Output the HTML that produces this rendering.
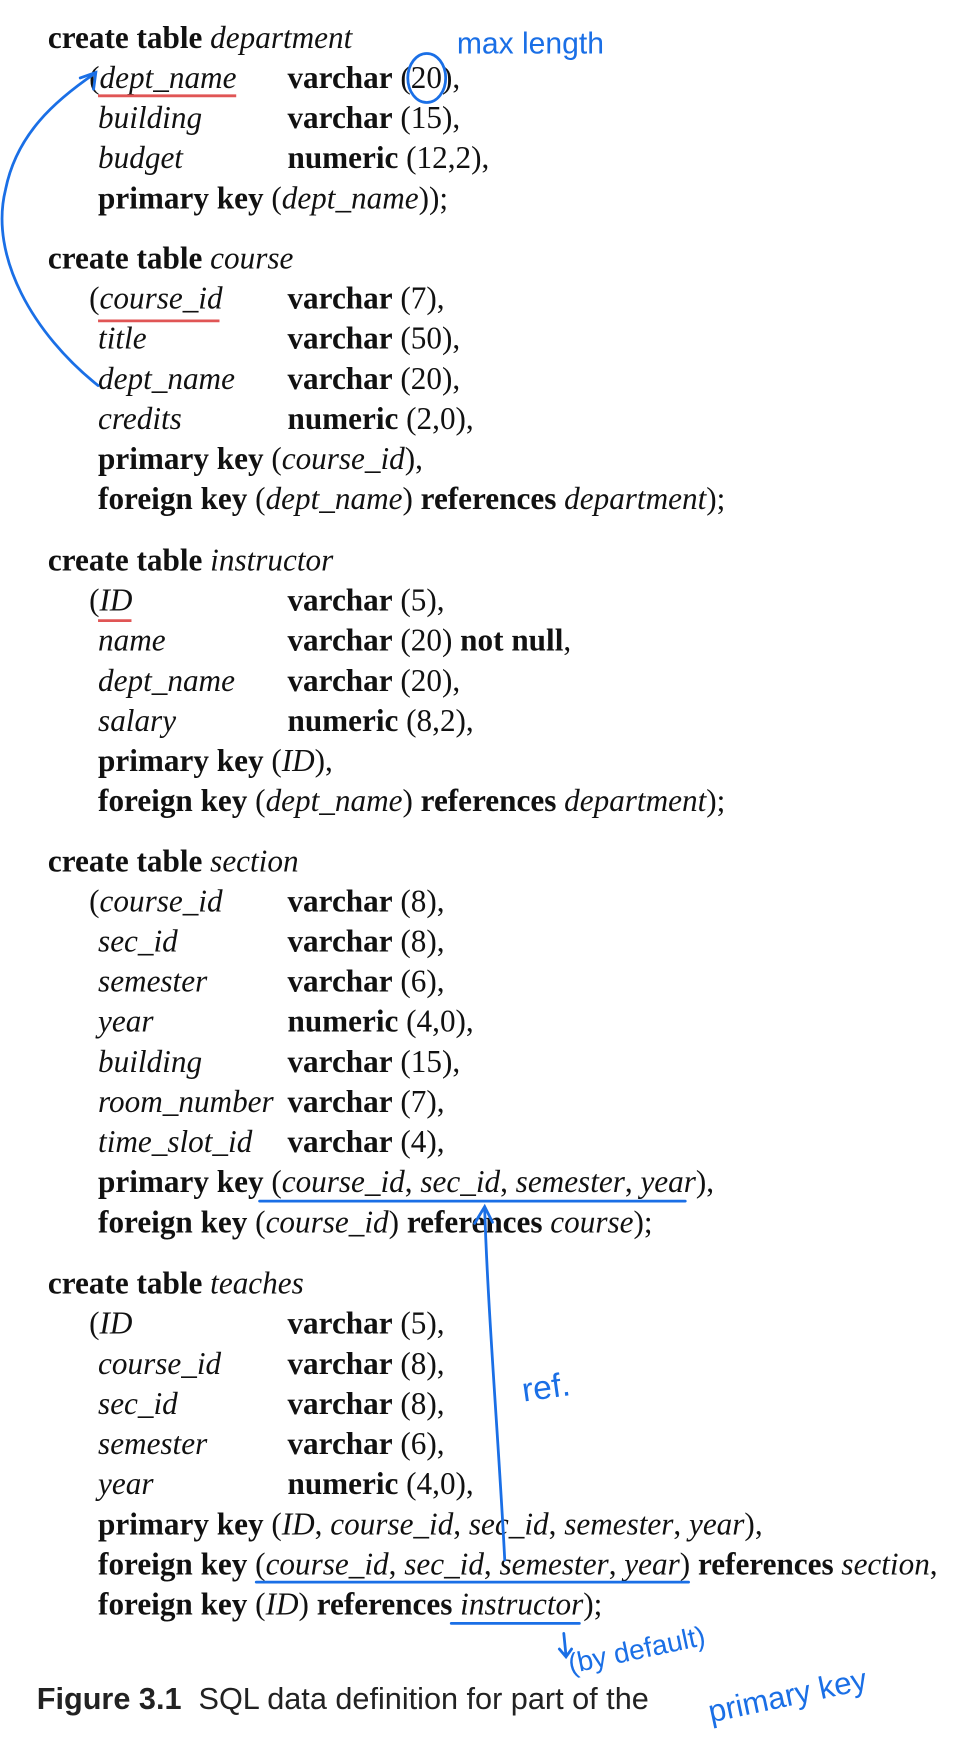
<!DOCTYPE html>
<html><head><meta charset="utf-8"><style>
html,body{margin:0;padding:0;background:#fff;}
body{width:956px;height:1742px;overflow:hidden;position:relative;}
#w{position:absolute;left:0;top:0;width:858px;height:1564px;transform:scale(1.1142);transform-origin:0 0;}
.blk{position:absolute;left:43px;font-family:"Liberation Serif",serif;font-size:28px;color:#111;}
.l{height:36px;line-height:36px;white-space:nowrap;position:relative;}
.ind{padding-left:45px;}
.p{padding-left:37px;}
.c{position:absolute;left:215px;top:0;}
b{font-weight:bold;}
i{font-style:italic;}
.cap{position:absolute;left:33px;top:1509px;font-family:"Liberation Sans",sans-serif;font-size:27.5px;color:#222;white-space:nowrap;}
svg{position:absolute;left:0;top:0;}
.hw{font-family:"Liberation Sans",sans-serif;fill:#1a6fe6;}
</style></head><body><div id="w">
<div class="blk" style="top:17px">
<div class="l"><b>create table</b> <i>department</i></div>
<div class="l p">(<i>dept_name</i><span class="c"><b>varchar</b> (20),</span></div>
<div class="l ind"><i>building</i><span class="c"><b>varchar</b> (15),</span></div>
<div class="l ind"><i>budget</i><span class="c"><b>numeric</b> (12,2),</span></div>
<div class="l ind"><b>primary key</b> (<i>dept_name</i>));</div>
</div>
<div class="blk" style="top:215px">
<div class="l"><b>create table</b> <i>course</i></div>
<div class="l p">(<i>course_id</i><span class="c"><b>varchar</b> (7),</span></div>
<div class="l ind"><i>title</i><span class="c"><b>varchar</b> (50),</span></div>
<div class="l ind"><i>dept_name</i><span class="c"><b>varchar</b> (20),</span></div>
<div class="l ind"><i>credits</i><span class="c"><b>numeric</b> (2,0),</span></div>
<div class="l ind"><b>primary key</b> (<i>course_id</i>),</div>
<div class="l ind"><b>foreign key</b> (<i>dept_name</i>) <b>references</b> <i>department</i>);</div>
</div>
<div class="blk" style="top:486px">
<div class="l"><b>create table</b> <i>instructor</i></div>
<div class="l p">(<i>ID</i><span class="c"><b>varchar</b> (5),</span></div>
<div class="l ind"><i>name</i><span class="c"><b>varchar</b> (20) <b>not null</b>,</span></div>
<div class="l ind"><i>dept_name</i><span class="c"><b>varchar</b> (20),</span></div>
<div class="l ind"><i>salary</i><span class="c"><b>numeric</b> (8,2),</span></div>
<div class="l ind"><b>primary key</b> (<i>ID</i>),</div>
<div class="l ind"><b>foreign key</b> (<i>dept_name</i>) <b>references</b> <i>department</i>);</div>
</div>
<div class="blk" style="top:756px">
<div class="l"><b>create table</b> <i>section</i></div>
<div class="l p">(<i>course_id</i><span class="c"><b>varchar</b> (8),</span></div>
<div class="l ind"><i>sec_id</i><span class="c"><b>varchar</b> (8),</span></div>
<div class="l ind"><i>semester</i><span class="c"><b>varchar</b> (6),</span></div>
<div class="l ind"><i>year</i><span class="c"><b>numeric</b> (4,0),</span></div>
<div class="l ind"><i>building</i><span class="c"><b>varchar</b> (15),</span></div>
<div class="l ind"><i>room_number</i><span class="c"><b>varchar</b> (7),</span></div>
<div class="l ind"><i>time_slot_id</i><span class="c"><b>varchar</b> (4),</span></div>
<div class="l ind"><b>primary key</b> (<i>course_id</i>, <i>sec_id</i>, <i>semester</i>, <i>year</i>),</div>
<div class="l ind"><b>foreign key</b> (<i>course_id</i>) <b>references</b> <i>course</i>);</div>
</div>
<div class="blk" style="top:1135px">
<div class="l"><b>create table</b> <i>teaches</i></div>
<div class="l p">(<i>ID</i><span class="c"><b>varchar</b> (5),</span></div>
<div class="l ind"><i>course_id</i><span class="c"><b>varchar</b> (8),</span></div>
<div class="l ind"><i>sec_id</i><span class="c"><b>varchar</b> (8),</span></div>
<div class="l ind"><i>semester</i><span class="c"><b>varchar</b> (6),</span></div>
<div class="l ind"><i>year</i><span class="c"><b>numeric</b> (4,0),</span></div>
<div class="l ind"><b>primary key</b> (<i>ID</i>, <i>course_id</i>, <i>sec_id</i>, <i>semester</i>, <i>year</i>),</div>
<div class="l ind"><b>foreign key</b> (<i>course_id</i>, <i>sec_id</i>, <i>semester</i>, <i>year</i>) <b>references</b> <i>section</i>,</div>
<div class="l ind"><b>foreign key</b> (<i>ID</i>) <b>references</b> <i>instructor</i>);</div>
</div>
<div class="cap"><b>Figure 3.1</b>&nbsp;&nbsp;SQL data definition for part of the</div>
<svg width="858" height="1564" viewBox="0 0 858 1564">
<g stroke="#e05555" stroke-width="2.5" fill="none">
<line x1="88" y1="86" x2="212" y2="86"/>
<line x1="88" y1="288" x2="197" y2="288"/>
<line x1="88" y1="557" x2="118" y2="557"/>
</g>
<g stroke="#1a6fe6" stroke-width="2.5" fill="none" stroke-linecap="round">
<ellipse cx="383" cy="70" rx="17" ry="22"/>
<path d="M88 346 C 30 300, -10 230, 5 170 C 15 120, 50 90, 85 66"/>
<path d="M72 70 L86 65 L84 80"/>
<line x1="233" y1="1078" x2="615" y2="1078"/>
<path d="M453 1400 C 448 1300, 438 1180, 435 1085"/>
<path d="M426 1098 L435 1083 L442 1097"/>
<line x1="230" y1="1420" x2="618" y2="1420"/>
<line x1="405" y1="1457" x2="520" y2="1457"/>
<path d="M506 1466 L508 1486 M502 1480 L508 1487 L513 1480"/>
</g>
<text class="hw" x="410" y="48" font-size="27">max length</text>
<text class="hw" x="470" y="1258" font-size="30" transform="rotate(-8 470 1258)">ref.</text>
<text class="hw" x="512" y="1502" font-size="25" transform="rotate(-12 512 1502)">(by default)</text>
<text class="hw" x="638" y="1546" font-size="28" transform="rotate(-12 638 1546)">primary key</text>
</svg>
</div></body></html>
